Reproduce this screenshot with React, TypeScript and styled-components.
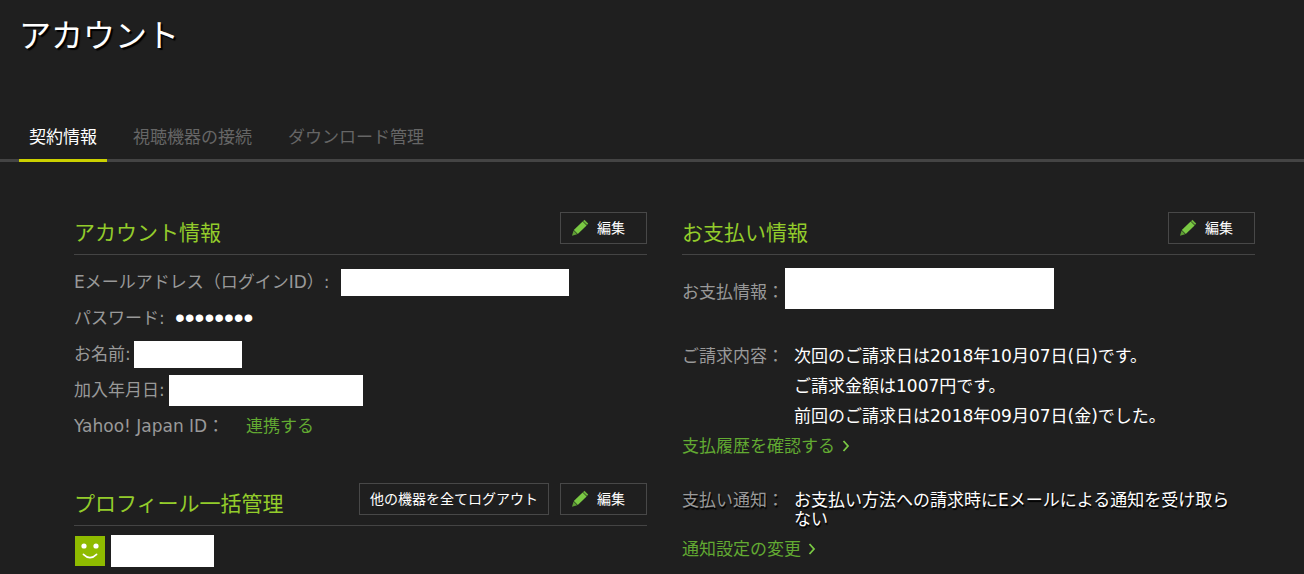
import React from "react";
import styled, { createGlobalStyle, css } from "styled-components";

const GlobalStyle = createGlobalStyle`
  *, *::before, *::after { box-sizing: border-box; }
  body {
    margin: 0;
    background: #1f1f1f;
    color: #fff;
    font-family: "DejaVu Sans", "Noto Sans CJK JP", sans-serif;
    font-size: 17px;
  }
`;

const textShadow = css`
  text-shadow: 1px 2px 1px #000;
`;

const PageTitle = styled.h1`
  margin: 0;
  padding: 16px 19px 0;
  font-size: 32px;
  font-weight: 400;
  line-height: 40px;
  text-shadow: 2px 2px 1px #000;
`;

const Tabs = styled.nav`
  display: flex;
  gap: 16px;
  margin-top: 60px;
  padding-left: 19px;
  border-bottom: 3px solid #444;
`;

const Tab = styled.a<{ $active?: boolean }>`
  margin-bottom: -3px;
  padding: 6px 10px 7px;
  border-bottom: 3px solid ${(p) => (p.$active ? "#cbd000" : "transparent")};
  color: ${(p) => (p.$active ? "#fff" : "#666")};
  line-height: 30px;
  text-decoration: none;
`;

const Columns = styled.main`
  display: grid;
  grid-template-columns: 1fr 1fr;
  gap: 35px;
  padding: 50px 49px 0 74px;
`;

const Column = styled.div`
  display: flex;
  flex-direction: column;
  gap: 39px;
  min-width: 0;
`;

const SectionHeader = styled.header`
  display: flex;
  align-items: flex-end;
  justify-content: space-between;
  padding-bottom: 10px;
  border-bottom: 1px solid #444;
`;

const SectionTitle = styled.h2`
  margin: 0;
  color: #93cc2b;
  font-size: 21px;
  font-weight: 400;
  line-height: 22px;
`;

const Actions = styled.div`
  display: flex;
  gap: 11px;
`;

const Button = styled.button`
  display: flex;
  align-items: center;
  gap: 8px;
  height: 32px;
  padding: 0 10px;
  border: 1px solid #484848;
  background: transparent;
  color: #fff;
  font: 14px/20px "DejaVu Sans", "Noto Sans CJK JP", sans-serif;
  white-space: nowrap;
  cursor: pointer;
`;

const EditButtonBox = styled(Button)`
  width: 87px;
`;

const Rows = styled.div`
  padding-top: 9px;
`;

const Row = styled.div`
  display: flex;
  align-items: center;
  min-height: 36px;
  line-height: 30px;
`;

const Label = styled.span<{ $width?: number }>`
  flex: none;
  min-width: ${(p) => (p.$width ? `${p.$width}px` : "0")};
  color: #999;
  white-space: nowrap;
`;

const Password = styled.span`
  margin-left: 6px;
  font-family: "Liberation Sans", sans-serif;
  font-size: 28px;
`;

const Mask = styled.span<{ $width: number; $height: number }>`
  flex: none;
  width: ${(p) => p.$width}px;
  height: ${(p) => p.$height}px;
  background: #fff;
`;

const TextLink = styled.a`
  display: inline-flex;
  align-items: center;
  gap: 7px;
  color: #62aa32;
  line-height: 30px;
  text-decoration: none;
`;

const InlineLink = styled(TextLink)`
  margin-left: 6px;
`;

const ProfileRow = styled.div`
  display: flex;
  align-items: center;
  gap: 6px;
  padding: 9px 1px 0;
`;

const Payment = styled.div`
  padding-top: 13px;
`;

const MethodRow = styled.div`
  display: flex;
  align-items: flex-end;
  margin-bottom: 32px;
  line-height: 34px;
`;

const Detail = styled.div`
  display: grid;
  grid-template-columns: 112px 1fr;
  line-height: 30px;
`;

const Notice = styled(Detail)`
  margin: 30px 0 5px;
  padding-right: 14px;
  line-height: 19px;
  ${textShadow}
`;

const Line = styled.div``;

const Pencil = () => (
  <svg width="18" height="18" viewBox="0 0 18 18" aria-hidden="true">
    <path d="M1 16.8 L2.6 11.6 L6.2 15.2 Z" fill="#5f9e35" />
    <path d="M2.8 11 L11.6 2.6 L15.6 6.4 L6.8 15 Z" fill="#7ac943" />
    <path d="M12 2.2 L13.4 0.8 L17.2 4.6 L16 6 Z" fill="#6db53c" />
  </svg>
);

const Chevron = () => (
  <svg width="8" height="12" viewBox="0 0 8 12" aria-hidden="true">
    <path d="M1.5 1 L6 6 L1.5 11" fill="none" stroke="#7ac943" strokeWidth="1.8" />
  </svg>
);

const Avatar = () => (
  <svg width="30" height="30" viewBox="0 0 30 30" role="img" aria-label="プロフィール">
    <rect width="30" height="30" fill="#8fbb00" />
    <circle cx="9" cy="10" r="2.6" fill="#fff" />
    <circle cx="21" cy="10" r="2.6" fill="#fff" />
    <path d="M8.4 18.4 Q15 25 21.6 18.4" fill="none" stroke="#fff" strokeWidth="1.6" strokeLinecap="round" />
  </svg>
);

const EditButton = () => (
  <EditButtonBox type="button">
    <Pencil />
    編集
  </EditButtonBox>
);

export default function App() {
  return (
    <>
      <GlobalStyle />
      <PageTitle>アカウント</PageTitle>
      <Tabs>
        <Tab href="#contract" $active aria-current="page">契約情報</Tab>
        <Tab href="#devices">視聴機器の接続</Tab>
        <Tab href="#downloads">ダウンロード管理</Tab>
      </Tabs>
      <Columns>
        <Column>
          <section>
            <SectionHeader>
              <SectionTitle>アカウント情報</SectionTitle>
              <EditButton />
            </SectionHeader>
            <Rows>
              <Row>
                <Label $width={267}>Eメールアドレス（ログインID）:</Label>
                <Mask $width={228} $height={27} />
              </Row>
              <Row>
                <Label $width={95}>パスワード:</Label>
                <Password>••••••••</Password>
              </Row>
              <Row>
                <Label $width={60}>お名前:</Label>
                <Mask $width={108} $height={27} />
              </Row>
              <Row>
                <Label $width={95}>加入年月日:</Label>
                <Mask $width={194} $height={31} />
              </Row>
              <Row>
                <Label $width={166}>Yahoo! Japan ID：</Label>
                <InlineLink href="#yahoo">連携する</InlineLink>
              </Row>
            </Rows>
          </section>
          <section>
            <SectionHeader>
              <SectionTitle>プロフィール一括管理</SectionTitle>
              <Actions>
                <Button type="button">他の機器を全てログアウト</Button>
                <EditButton />
              </Actions>
            </SectionHeader>
            <ProfileRow>
              <Avatar />
              <Mask $width={103} $height={32} />
            </ProfileRow>
          </section>
        </Column>
        <Column>
          <section>
            <SectionHeader>
              <SectionTitle>お支払い情報</SectionTitle>
              <EditButton />
            </SectionHeader>
            <Payment>
              <MethodRow>
                <Label $width={103}>お支払情報：</Label>
                <Mask $width={269} $height={41} />
              </MethodRow>
              <Detail>
                <Label>ご請求内容：</Label>
                <div>
                  <Line>次回のご請求日は2018年10月07日(日)です。</Line>
                  <Line>ご請求金額は1007円です。</Line>
                  <Line>前回のご請求日は2018年09月07日(金)でした。</Line>
                </div>
              </Detail>
              <TextLink href="#history">
                支払履歴を確認する
                <Chevron />
              </TextLink>
              <Notice>
                <Label>支払い通知：</Label>
                <div>お支払い方法への請求時にEメールによる通知を受け取らない</div>
              </Notice>
              <TextLink href="#notifications">
                通知設定の変更
                <Chevron />
              </TextLink>
            </Payment>
          </section>
        </Column>
      </Columns>
    </>
  );
}
